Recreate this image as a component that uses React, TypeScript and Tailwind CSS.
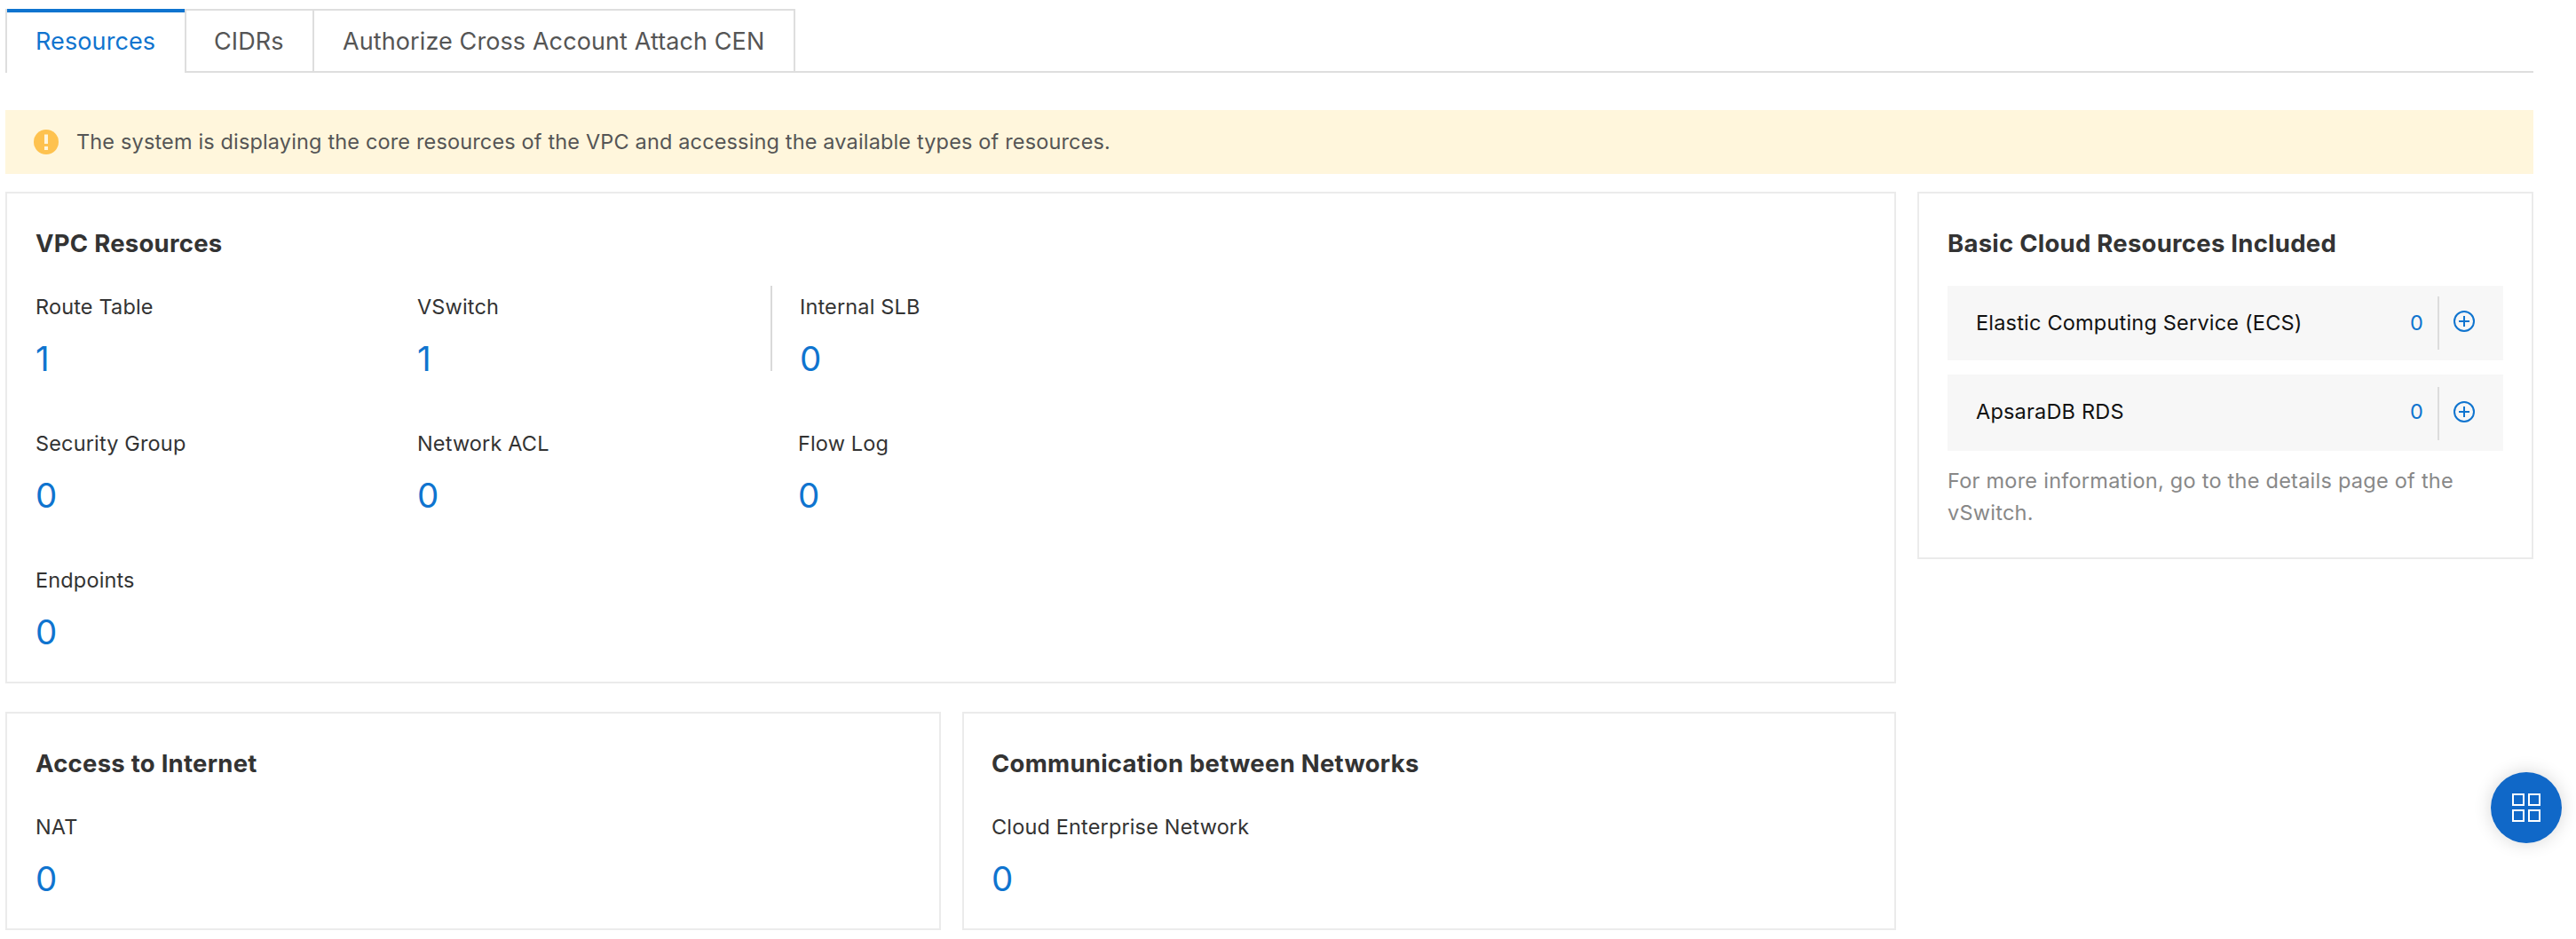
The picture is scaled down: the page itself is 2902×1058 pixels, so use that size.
import React from "react";

type StatProps = { label: string; value: number };

function Stat({ label, value }: StatProps) {
  return (
    <div className="h-24">
      <div className="pt-[5px] text-[23.5px] leading-[38px] tracking-[0.15px] text-[#333]">{label}</div>
      <div className="pt-[15px] text-[38.5px] leading-[48px] text-[#0f74cf]">{value}</div>
    </div>
  );
}

function CardTitle({ children }: { children: React.ReactNode }) {
  return (
    <h3 className="pt-9 text-[27.5px] leading-[40px] font-bold tracking-[0.25px] whitespace-nowrap text-[#333]">{children}</h3>
  );
}

const cardClass = "border-2 border-[#ebebeb] bg-white px-8";

function PlusCircle() {
  return (
    <svg className="size-6" viewBox="0 0 24 24" fill="none" stroke="#0f74cf" strokeWidth="2">
      <circle cx="12" cy="12" r="11" />
      <path d="M6 12h12M12 6v12" />
    </svg>
  );
}

function ResourceRow({ name, count, tall }: { name: string; count: number; tall?: boolean }) {
  return (
    <div className={`flex bg-[#f7f7f7] pl-8 text-[23.5px] tracking-[0.2px] ${tall ? "h-[86px]" : "h-[84px]"}`}>
      <div className="flex-1 pt-[23px] leading-[38px] text-[#111]">{name}</div>
      <div className="w-[31px] pt-[23px] leading-[38px] text-[#0f74cf]">{count}</div>
      <div className={`h-[60px] w-[2px] bg-[#dcdcdc] ${tall ? "mt-[14px]" : "mt-3"}`} />
      <div className={`mr-8 ml-4 ${tall ? "pt-[30px]" : "pt-7"}`}>
        <PlusCircle />
      </div>
    </div>
  );
}

export default function App() {
  return (
    <div className="relative h-[1058px] w-[2902px] overflow-hidden bg-white pt-[10px] pl-[6px] font-['Inter',sans-serif]">
      <div className="w-[2848px]">
        <nav className="flex h-[72px] text-[27px] leading-[40px] tracking-[0.1px] whitespace-nowrap text-[#555]">
          <div className="w-[202px] border-l-2 border-[#dedede]">
            <div className="h-1 bg-[#0f74cf]" />
            <div className="pt-[13px] pl-8 text-[#0f74cf]">Resources</div>
          </div>
          <div className="w-[144px] border-2 border-r-0 border-[#dedede] pt-[15px] pl-[31px]">CIDRs</div>
          <div className="w-[544px] border-2 border-[#dedede] pt-[15px] pl-8">Authorize Cross Account Attach CEN</div>
          <div className="flex-1 border-b-2 border-[#dedede]" />
        </nav>

        <div className="mt-[42px] flex h-[72px] items-center bg-[#fff6dc] pl-8">
          <svg className="size-7" viewBox="0 0 28 28">
            <circle cx="14" cy="14" r="14" fill="#fec24f" />
            <path d="M12 5.5h4V16h-4zM12 19h4v4h-4z" fill="#fff6dc" />
          </svg>
          <div className="pl-5 text-[23.5px] leading-9 tracking-[0.15px] text-[#555]">
            The system is displaying the core resources of the VPC and accessing the available types of resources.
          </div>
        </div>

        <div className="mt-5 flex items-start gap-6">
          <div className="w-[2130px]">
            <section className={`${cardClass} h-[554px]`}>
              <CardTitle>VPC Resources</CardTitle>
              <div className="mt-7 grid grid-cols-[430px_398px_500px] gap-y-[58px]">
                <Stat label="Route Table" value={1} />
                <Stat label="VSwitch" value={1} />
                <div className="border-l-2 border-[#d9d9d9] pl-[31px]">
                  <Stat label="Internal SLB" value={0} />
                </div>
                <Stat label="Security Group" value={0} />
                <Stat label="Network ACL" value={0} />
                <div className="pl-[31px]">
                  <Stat label="Flow Log" value={0} />
                </div>
                <Stat label="Endpoints" value={0} />
              </div>
            </section>
            <div className="mt-8 flex gap-6">
              <section className={`${cardClass} h-[246px] w-[1054px]`}>
                <CardTitle>Access to Internet</CardTitle>
                <div className="mt-7">
                  <Stat label="NAT" value={0} />
                </div>
              </section>
              <section className="h-[246px] w-[1052px] border-2 border-[#ebebeb] bg-white px-[31px]">
                <CardTitle>Communication between Networks</CardTitle>
                <div className="mt-7">
                  <Stat label="Cloud Enterprise Network" value={0} />
                </div>
              </section>
            </div>
          </div>

          <section className={`${cardClass} h-[414px] w-[694px]`}>
            <CardTitle>Basic Cloud Resources Included</CardTitle>
            <div className="mt-7 flex flex-col gap-4">
              <ResourceRow name="Elastic Computing Service (ECS)" count={0} />
              <ResourceRow name="ApsaraDB RDS" count={0} tall />
            </div>
            <p className="mt-4 text-[23.5px] leading-9 tracking-[0.25px] text-[#888]">
              For more information, go to the details page of the vSwitch.
            </p>
          </section>
        </div>
      </div>

      <button className="absolute top-[870px] left-[2806px] flex size-20 items-center justify-center rounded-full bg-[#1068c8] shadow-[0_0_20px_rgba(0,0,0,0.16)]">
        <svg className="size-8" viewBox="0 0 32 32" fill="none" stroke="#fff" strokeWidth="2">
          <path d="M1 1h12v12H1zM19 1h12v12H19zM1 19h12v12H1zM19 19h12v12H19z" />
        </svg>
      </button>
    </div>
  );
}
